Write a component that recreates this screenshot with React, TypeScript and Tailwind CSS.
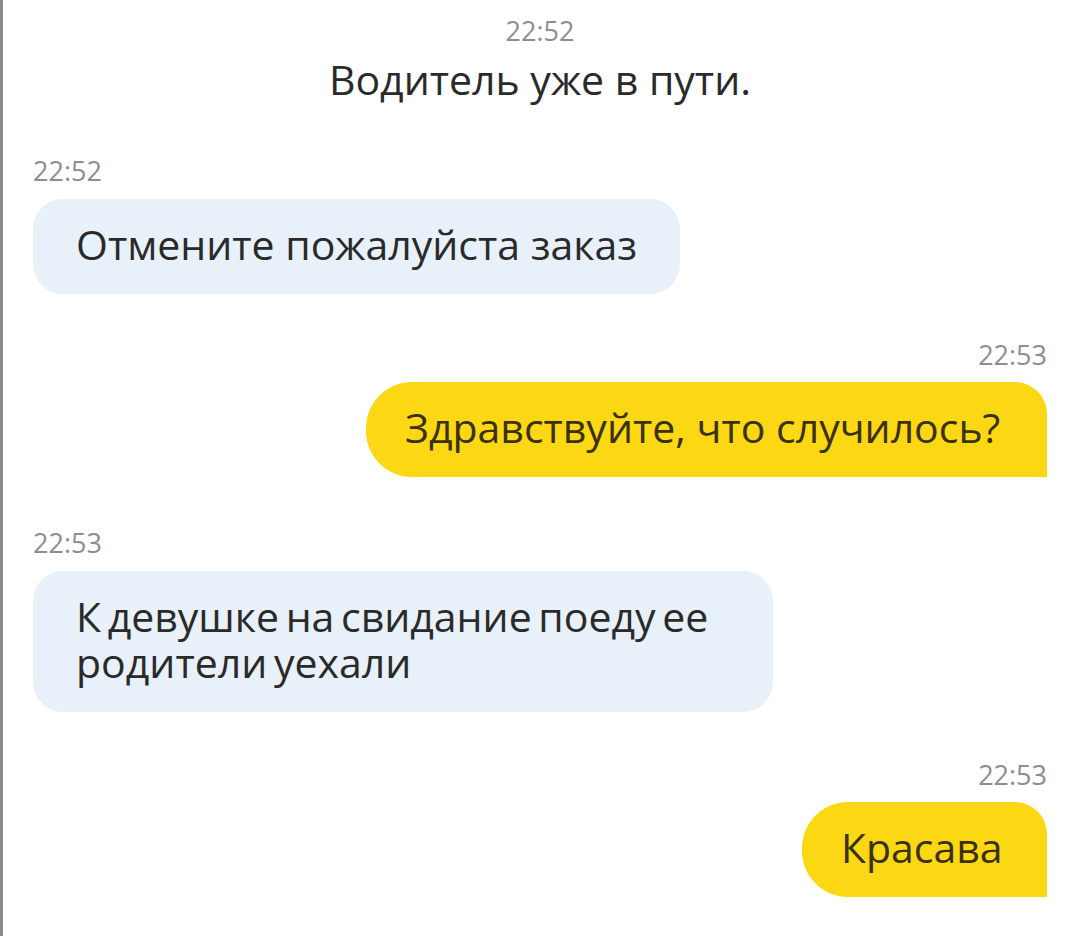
import React from "react";

type Msg = {
  time: string;
  text: React.ReactNode;
  mine: boolean;
  width: string;
  extra?: string;
};

const messages: Msg[] = [
  { time: "22:52", text: "Отмените пожалуйста заказ", mine: false, width: "w-[647px]" },
  { time: "22:53", text: "Здравствуйте, что случилось?", mine: true, width: "w-[681px]" },
  {
    time: "22:53",
    text: (
      <>
        К девушке на свидание поеду ее
        <br />
        родители уехали
      </>
    ),
    mine: false,
    width: "w-[740px]",
    extra: "[word-spacing:-4px]",
  },
  { time: "22:53", text: "Красава", mine: true, width: "w-[245px]" },
];

function Time({ value, className = "" }: { value: string; className?: string }) {
  return (
    <div className={`text-[27px] leading-[27px] text-[#8e8e8e] ${className}`}>{value}</div>
  );
}

function Bubble({ msg }: { msg: Msg }) {
  const shape = msg.mine
    ? "bg-[#fcd814] text-[#3a3104] rounded-l-[46px] rounded-tr-[32px] rounded-br-none pl-[39px]"
    : "bg-[#e8f0f9] text-[#2a2a2a] rounded-[30px] pl-[43px]";
  return (
    <div
      className={`${msg.width} ${shape} ${msg.extra ?? ""} pt-[22px] pb-[27px] text-[41px] leading-[46px]`}
    >
      {msg.text}
    </div>
  );
}

export default function App() {
  const gaps = ["mt-[54px]", "mt-[47px]", "mt-[52px]", "mt-[49px]"];
  return (
    <div className="w-[1080px] min-h-[936px] bg-white border-l-[3px] border-[#8a8a8a] pl-[30px] pr-[33px] pt-[17px] font-['Open_Sans',sans-serif]">
      <div className="flex flex-col items-center">
        <Time value="22:52" />
        <div className="mt-[11px] text-[41px] leading-[48px] text-[#2a2a2a]">
          Водитель уже в пути.
        </div>
      </div>

      {messages.map((m, i) => (
        <div key={i} className={`flex flex-col ${m.mine ? "items-end" : "items-start"} ${gaps[i]}`}>
          <Time value={m.time} />
          <div className={m.mine ? "mt-[14px]" : "mt-[15px]"}>
            <Bubble msg={m} />
          </div>
        </div>
      ))}
    </div>
  );
}
